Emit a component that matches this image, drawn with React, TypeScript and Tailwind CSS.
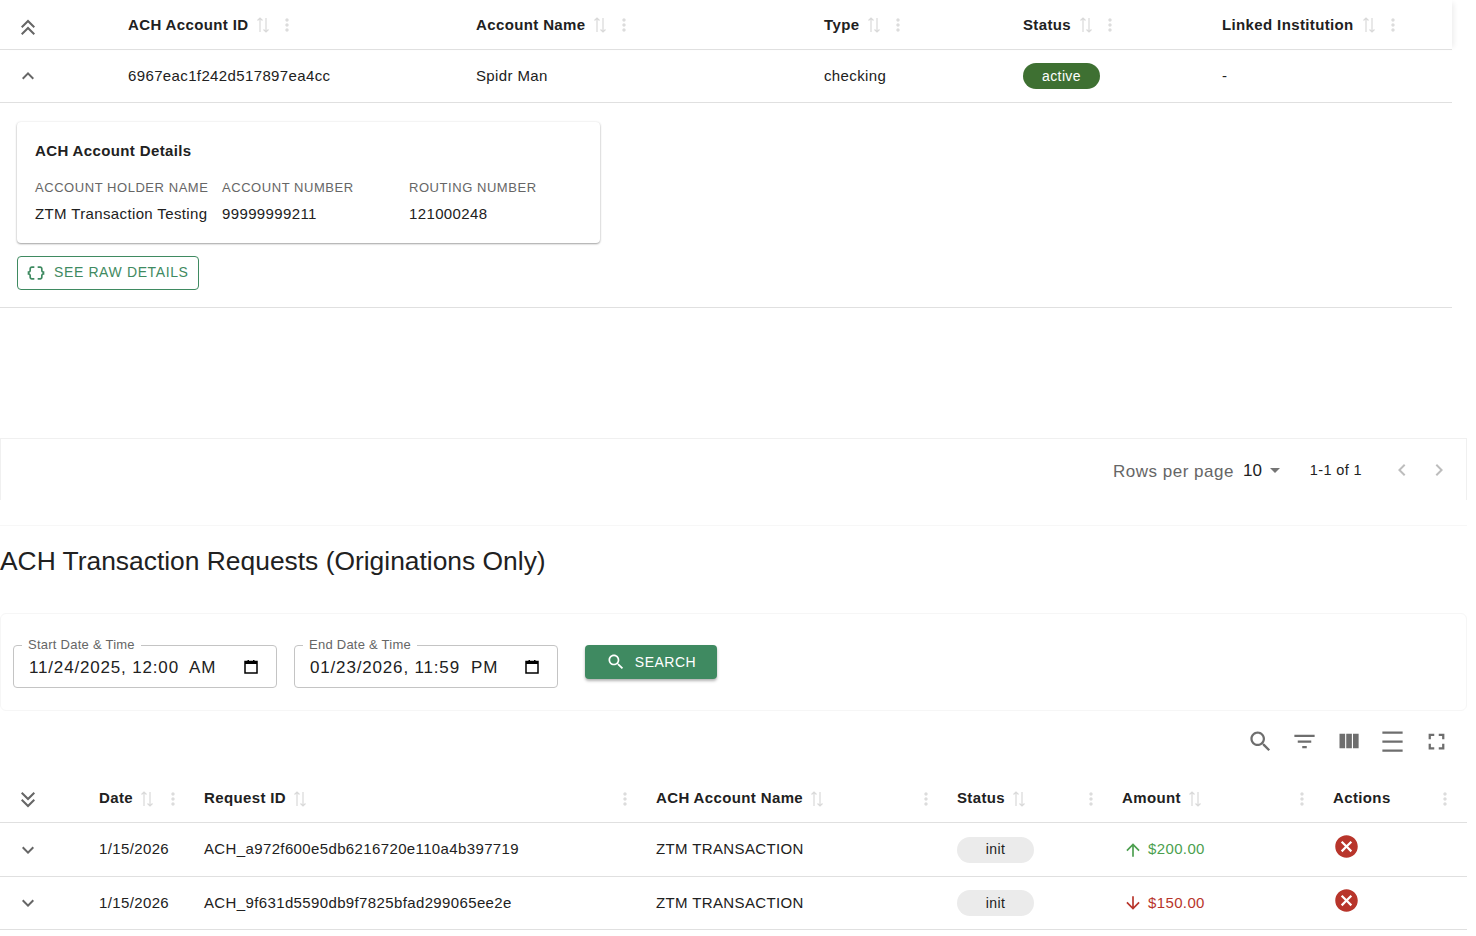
import React from 'react';

const P = {
  doubleUp: 'M17.59 18 19 16.59l-7-7-7 7L6.41 18 12 12.41z M17.59 11 19 9.59l-7-7-7 7L6.41 11 12 5.41z',
  doubleDown: 'M17.59 6 19 7.41l-7 7-7-7L6.41 6 12 11.59z M17.59 13 19 14.41l-7 7-7-7L6.41 13 12 18.59z',
  less: 'm12 8-6 6 1.41 1.41L12 10.83l4.59 4.58L18 14z',
  more: 'M16.59 8.59 12 13.17 7.41 8.59 6 10l6 6 6-6z',
  kebab: 'M12 8c1.1 0 2-.9 2-2s-.9-2-2-2-2 .9-2 2 .9 2 2 2zm0 2c-1.1 0-2 .9-2 2s.9 2 2 2 2-.9 2-2-.9-2-2-2zm0 6c-1.1 0-2 .9-2 2s.9 2 2 2 2-.9 2-2-.9-2-2-2z',
  search: 'M15.5 14h-.79l-.28-.27C15.41 12.59 16 11.11 16 9.5 16 5.91 13.09 3 9.5 3S3 5.91 3 9.5 5.91 16 9.5 16c1.61 0 3.09-.59 4.23-1.57l.27.28v.79l5 4.99L20.49 19l-4.99-5zm-6 0C7.01 14 5 11.99 5 9.5S7.01 5 9.5 5 14 7.01 14 9.5 11.99 14 9.5 14z',
  filter: 'M10 18h4v-2h-4v2zM3 6v2h18V6H3zm3 7h12v-2H6v2z',
  columns: 'M10 18h5V5h-5v13zm-6 0h5V5H4v13zM16 5v13h5V5h-5z',
  density: 'M3 3h18v2H3zM3 19h18v2H3zM3 11h18v2H3z',
  fullscreen: 'M7 14H5v5h5v-2H7v-3zm-2-4h2V7h3V5H5v5zm12 7h-3v2h5v-5h-2v3zM14 5v2h3v3h2V5h-5z',
  cancel: 'M12 2C6.47 2 2 6.47 2 12s4.47 10 10 10 10-4.47 10-10S17.53 2 12 2zm5 13.59L15.59 17 12 13.41 8.41 17 7 15.59 10.59 12 7 8.41 8.41 7 12 10.59 15.59 7 17 8.41 13.41 12 17 15.59z',
  dataObject: 'M4 7v2c0 .55-.45 1-1 1H2v4h1c.55 0 1 .45 1 1v2c0 1.65 1.35 3 3 3h3v-2H7c-.55 0-1-.45-1-1v-2c0-1.3-.84-2.42-2-2.83v-.34C5.16 11.42 6 10.3 6 9V7c0-.55.45-1 1-1h3V4H7C5.35 4 4 5.35 4 7zM21 10c-.55 0-1-.45-1-1V7c0-1.65-1.35-3-3-3h-3v2h3c.55 0 1 .45 1 1v2c0 1.3.84 2.42 2 2.83v.34c-1.16.41-2 1.52-2 2.83v2c0 .55-.45 1-1 1h-3v2h3c1.65 0 3-1.35 3-3v-2c0-.55.45-1 1-1h1v-4h-1z',
  up: 'M4 12l1.41 1.41L11 7.83V20h2V7.83l5.58 5.59L20 12l-8-8-8 8z',
  down: 'M20 12l-1.41-1.41L13 16.17V4h-2v12.17l-5.58-5.59L4 12l8 8 8-8z',
  left: 'M15.41 7.41 14 6l-6 6 6 6 1.41-1.41L10.83 12z',
  right: 'M10 6 8.59 7.41 13.17 12l-4.58 4.59L10 18l6-6z',
  drop: 'M7 10l5 5 5-5z',
};

const Icon = ({ d, className }: { d: string; className?: string }) => (
  <svg viewBox="0 0 24 24" fill="currentColor" className={className}>
    <path d={d} />
  </svg>
);

const SortIcon = () => (
  <svg viewBox="0 0 14 18" className="w-[14px] h-[18px] shrink-0 text-[#d9d9d9]" fill="none" stroke="currentColor" strokeWidth="1.2">
    <path d="M4 16V2M1.5 4.5 4 2l2.5 2.5" />
    <path d="M10 2v14M7.5 13.5 10 16l2.5-2.5" />
  </svg>
);

const Kebab = () => <Icon d={P.kebab} className="w-5 h-5 shrink-0 text-[#dcdcdc]" />;

const CalendarIcon = () => (
  <svg viewBox="0 0 16 16" className="w-4 h-4 text-black">
    <path d="M2 2.5h12V14H2z" fill="none" stroke="currentColor" strokeWidth="1.5" />
    <path d="M2 2h12v3H2z" fill="currentColor" />
    <path d="M4.5 1h1.5v2H4.5zM10 1h1.5v2H10z" fill="currentColor" />
  </svg>
);

const HeadTitle = ({ label }: { label: string }) => (
  <span className="text-[15px] font-bold text-[#212121] whitespace-nowrap">{label}</span>
);

const accountCols = ['ACH Account ID', 'Account Name', 'Type', 'Status', 'Linked Institution'];

const DateField = ({ label, value }: { label: string; value: string }) => (
  <div className="relative w-[264px] h-[43px] border border-[#c4c4c4] rounded-[4px] flex items-center justify-between pl-[15px] pr-[17px]">
    <span className="absolute -top-[9px] left-[8px] bg-white px-[6px] text-[13px] leading-[16px] tracking-[0.25px] text-[#666]">{label}</span>
    <span className="text-[17px] text-[#212121] tracking-[0.83px] whitespace-pre mt-[2px]">{value}</span>
    <CalendarIcon />
  </div>
);

const txRows = [
  { id: 'ACH_a972f600e5db6216720e110a4b397719', amount: '$200.00', incoming: true },
  { id: 'ACH_9f631d5590db9f7825bfad299065ee2e', amount: '$150.00', incoming: false },
];

const txCols = 'grid grid-cols-[99px_105px_452px_301px_165px_211px_134px]';

export default function App() {
  return (
    <div className="w-full min-h-[936px] bg-white overflow-hidden text-[15px] tracking-[0.37px] text-[#212121] font-['Liberation_Sans',Arial,sans-serif]">
      <div className="w-[1467px]">
        {/* Accounts table */}
        <div className="w-[1452px] h-[50px] grid grid-cols-[128px_348px_348px_199px_199px_230px] border-b border-[#e0e0e0] shadow-[5px_0_5px_-3px_rgba(0,0,0,0.07)]">
          <div className="flex items-center pl-4">
            <Icon d={P.doubleUp} className="w-6 h-6 text-[#666] mt-[8px]" />
          </div>
          {accountCols.map(label => (
            <div key={label} className="flex items-center pt-[1px]">
              <HeadTitle label={label} />
              <span className="ml-2"><SortIcon /></span>
              <span className="ml-[7px]"><Kebab /></span>
            </div>
          ))}
        </div>
        <div className="w-[1452px] h-[53px] grid grid-cols-[128px_348px_348px_199px_199px_230px] items-center border-b border-[#e0e0e0]">
          <div className="pl-4"><Icon d={P.less} className="w-6 h-6 text-[#666]" /></div>
          <div>6967eac1f242d517897ea4cc</div>
          <div>Spidr Man</div>
          <div>checking</div>
          <div>
            <span className="flex w-[77px] h-[26px] items-center justify-center rounded-full bg-[#3e7032] text-white text-[14px]">active</span>
          </div>
          <div>-</div>
        </div>

        {/* Expanded detail */}
        <div className="w-[1452px] h-[205px] border-b border-[#e0e0e0] pl-[17px] pt-[19px]">
          <div className="w-[583px] h-[121px] rounded-[4px] bg-white px-[18px] pt-[19px] shadow-[0_1px_2px_rgba(0,0,0,0.35),0_0_3px_rgba(0,0,0,0.08)]">
            <div className="text-[15px] font-bold leading-[20px]">ACH Account Details</div>
            <div className="mt-[18px] grid grid-cols-[187px_187px_1fr]">
              <div className="text-[13px] leading-[18px] text-[#666] tracking-[0.55px] whitespace-nowrap">ACCOUNT HOLDER NAME</div>
              <div className="text-[13px] leading-[18px] text-[#666] tracking-[0.55px]">ACCOUNT NUMBER</div>
              <div className="text-[13px] leading-[18px] text-[#666] tracking-[0.55px]">ROUTING NUMBER</div>
              <div className="mt-[8px] leading-[18px] whitespace-nowrap">ZTM Transaction Testing</div>
              <div className="mt-[8px] leading-[18px]">99999999211</div>
              <div className="mt-[8px] leading-[18px]">121000248</div>
            </div>
          </div>
          <button className="mt-[13px] w-[182px] h-[34px] flex items-center gap-[8px] pl-[8px] pb-[2px] border border-[#3f8a61] rounded-[4px] text-[#3f8a61] text-[14px] tracking-[0.62px]">
            <Icon d={P.dataObject} className="w-[20px] h-[20px] mt-[2px]" />
            SEE RAW DETAILS
          </button>
        </div>

        {/* Pagination */}
        <div className="mt-[130px] h-[62px] border-t border-x border-[#f0f0f0] flex items-center justify-end text-[15px]">
          <span className="text-[#666] text-[17px] tracking-[0.5px] mt-[4px]">Rows per page</span>
          <span className="ml-[9px] text-[17px] tracking-normal text-[#212121] mt-[2px]">10</span>
          <Icon d={P.drop} className="w-6 h-6 text-[#757575] ml-[1px]" />
          <span className="ml-[23px] text-[14.5px] mt-[2px]">1-1 of 1</span>
          <Icon d={P.left} className="w-6 h-6 text-[#bdbdbd] ml-[28px]" />
          <Icon d={P.right} className="w-6 h-6 text-[#bdbdbd] ml-[13px] mr-[15px]" />
        </div>
        <div className="mt-[25px] border-t border-[#f7f7f7]" />

        {/* Transactions */}
        <h2 className="mt-[18px] text-[26.4px] tracking-normal leading-[34px] text-[#212121]">ACH Transaction Requests (Originations Only)</h2>

        <div className="mt-[35px] h-[98px] rounded-[6px] border border-[#f6f6f6] flex items-start pl-[12px] pt-[31px]">
          <DateField label="Start Date &amp; Time" value="11/24/2025, 12:00  AM" />
          <div className="ml-[17px]"><DateField label="End Date &amp; Time" value="01/23/2026, 11:59  PM" /></div>
          <button className="ml-[27px] w-[132px] h-[34px] flex items-center justify-center gap-[9px] rounded-[4px] bg-[#3f8a61] text-white text-[14px] tracking-[0.5px] shadow-[0_2px_3px_rgba(0,0,0,0.3)]">
            <Icon d={P.search} className="w-[20px] h-[20px]" />
            SEARCH
          </button>
        </div>

        <div className="h-[64px] flex items-start justify-end pt-[17px] pr-[17px] gap-[17px] text-[#6e6e6e]">
          <Icon d={P.search} className="w-[27px] h-[27px]" />
          <Icon d={P.filter} className="w-[27px] h-[27px]" />
          <Icon d={P.columns} className="w-[27px] h-[27px]" />
          <Icon d={P.density} className="w-[27px] h-[27px]" />
          <Icon d={P.fullscreen} className="w-[27px] h-[27px]" />
        </div>

        <div className={`${txCols} h-[48px] border-b border-[#e0e0e0] items-center`}>
          <div className="pl-4"><Icon d={P.doubleDown} className="w-6 h-6 text-[#666] -mt-[1px]" /></div>
          {['Date', 'Request ID', 'ACH Account Name', 'Status', 'Amount', 'Actions'].map((label, i) => (
            <div key={label} className={`flex items-center justify-between ${i === 5 ? 'pr-[12px]' : 'pr-[21px]'}`}>
              <span className="flex items-center gap-[7px]">
                <HeadTitle label={label} />
                {label !== 'Actions' && <SortIcon />}
              </span>
              <Kebab />
            </div>
          ))}
        </div>

        {txRows.map((row, i) => (
          <div key={row.id} className={`${txCols} ${i === 0 ? 'h-[54px]' : 'h-[53px]'} border-b border-[#e0e0e0] items-center`}>
            <div className="pl-4"><Icon d={P.more} className="w-6 h-6 text-[#666]" /></div>
            <div>1/15/2026</div>
            <div className="whitespace-nowrap">{row.id}</div>
            <div>ZTM TRANSACTION</div>
            <div>
              <span className="flex w-[77px] h-[26px] items-center justify-center rounded-full bg-[#ebebeb] text-[14px]">init</span>
            </div>
            <div className={`flex items-center gap-[5px] ${row.incoming ? 'text-[#4c9f4f]' : 'text-[#b8352b]'}`}>
              <Icon d={row.incoming ? P.up : P.down} className="w-[20px] h-[20px] ml-[1px]" />
              <span>{row.amount}</span>
            </div>
            <div className="-mt-[6px]">
              <Icon d={P.cancel} className="w-[27px] h-[27px] text-[#b8352b]" />
            </div>
          </div>
        ))}
      </div>
    </div>
  );
}
